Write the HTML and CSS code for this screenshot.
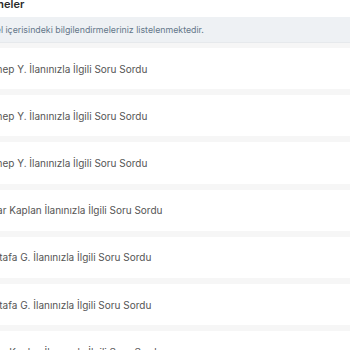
FILE: index.html
```html
<!DOCTYPE html>
<html lang="tr">
<head>
<meta charset="utf-8">
<link rel="stylesheet" href="styles.css">
</head>
<body>
<div class="page">
  <h1 class="title">Bilgilendirmeler</h1>
  <div class="info">Panel içerisindeki bilgilendirmeleriniz listelenmektedir.</div>
  <ul class="list">
    <li class="item"><span class="text">Zeynep Y. İlanınızla İlgili Soru Sordu</span></li>
    <li class="item"><span class="text">Zeynep Y. İlanınızla İlgili Soru Sordu</span></li>
    <li class="item"><span class="text">Zeynep Y. İlanınızla İlgili Soru Sordu</span></li>
    <li class="item"><span class="text">Bahar Kaplan İlanınızla İlgili Soru Sordu</span></li>
    <li class="item"><span class="text">Mustafa G. İlanınızla İlgili Soru Sordu</span></li>
    <li class="item"><span class="text">Mustafa G. İlanınızla İlgili Soru Sordu</span></li>
    <li class="item"><span class="text">Bahar Kaplan İlanınızla İlgili Soru Sordu</span></li>
  </ul>
</div>
</body>
</html>
```
FILE: styles.css
```css
html, body {
  margin: 0;
  padding: 0;
  background: #ffffff;
  overflow: hidden;
}
body {
  font-family: Inter, "Noto Sans", sans-serif;
  width: 350px;
  height: 350px;
}
.page {
  margin-left: -74px;
  margin-top: -6px;
}
.title {
  margin: 0;
  padding-left: 15px;
  height: 23px;
  line-height: 20px;
  font-size: 11px;
  font-weight: 600;
  color: #2a2a2a;
}
.info {
  background: #eef1f4;
  height: 25px;
  line-height: 25px;
  padding-left: 54px;
  font-size: 8.8px;
  color: #64778a;
  border-bottom: 1px solid #e6e9ec;
}
.list {
  list-style: none;
  margin: 0;
  padding: 5px 0 0;
  background: #f6f6f6;
  display: flex;
  flex-direction: column;
  gap: 6px;
}
.item {
  background: #fff;
  height: 41.2px;
  display: flex;
  align-items: center;
  padding-left: 53px;
}
.text {
  font-size: 10px;
  color: #555;
}
```
